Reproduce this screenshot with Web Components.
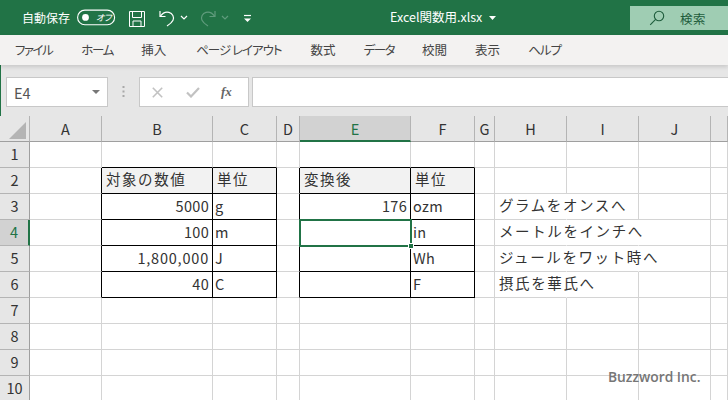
<!DOCTYPE html>
<html lang="ja"><head><meta charset="utf-8"><title>Excel</title>
<style>
html,body{margin:0;padding:0;background:#fff}
body{width:728px;height:400px;overflow:hidden;font-family:"Noto Sans CJK JP","Noto Sans",sans-serif}
</style></head><body>
<x-titlebar></x-titlebar>
<x-tabs></x-tabs>
<x-formula></x-formula>
<x-sheet></x-sheet>
<script>
const FONT='"Noto Sans CJK JP","Noto Sans",sans-serif';
function mk(tag,css,html){customElements.define(tag,class extends HTMLElement{constructor(){super();this.attachShadow({mode:'open'}).innerHTML='<style>'+css+'</style>'+html;}});}

mk('x-titlebar',`
:host{display:flex;align-items:flex-start;height:35px;background:#217346;color:#fff;font-family:${FONT};box-sizing:border-box;position:relative}
.lbl{font-size:12px;font-feature-settings:"palt";margin:10px 0 0 22px;line-height:16px;width:48px;white-space:nowrap}
svg{display:block;flex:none}
.tg{position:relative;margin:9px 0 0 7px;width:39px;height:17px;flex:none}
.tg span{position:absolute;left:19px;top:2px;font-size:9px;line-height:13px;font-style:italic;font-feature-settings:"palt";white-space:nowrap;letter-spacing:-.3px}
.title{font-size:12.5px;line-height:16px;margin:9px 0 0 0;white-space:nowrap;font-feature-settings:"palt"}
.search{margin-left:auto;margin-top:6px;width:98px;height:24px;background:#9fcdb3;display:flex;align-items:center;color:#1e5c3c;font-size:12.5px}
.search span{margin-left:15px;font-feature-settings:"palt";letter-spacing:.5px}
`,`
<div class="lbl">自動保存</div>
<div class="tg"><svg width="39" height="17" viewBox="0 0 39 17"><rect x=".6" y="1.1" width="37" height="14.6" rx="7.3" fill="none" stroke="#fff" stroke-width="1.1"/><circle cx="8.5" cy="8.4" r="3.4" fill="#fff"/></svg><span>オフ</span></div>
<svg style="margin:10px 0 0 12px" width="18" height="18" viewBox="0 0 18 18" fill="none" stroke="#fff" stroke-width="1"><path d="M1.5 1.5H16.5V16.5H1.5Z"/><path d="M4.5 1.5V7.5H13.5V1.5"/><path d="M5 16.5V11H13V16.5"/></svg>
<svg style="margin:9px 0 0 12px" width="18" height="19" viewBox="0 0 18 19" fill="none" stroke="#fff" stroke-width="1.2"><path d="M2 2V7.5H7.5"/><path d="M2.4 7.2C4.5 4.2 8 2.6 11 3.4C14.6 4.4 16.4 8 15 11.2C14 13.4 11.5 15.4 9 17"/></svg>
<svg style="margin:15px 0 0 4px" width="8" height="5" viewBox="0 0 8 5" fill="none" stroke="#fff" stroke-width="1.2"><path d="M1 1L4 4L7 1"/></svg>
<svg style="margin:9px 0 0 11px" width="18" height="19" viewBox="0 0 18 19" fill="none" stroke="#5f9b7c" stroke-width="1.2"><path d="M16 2V7.5H10.5"/><path d="M15.6 7.2C13.5 4.2 10 2.6 7 3.4C3.4 4.4 1.6 8 3 11.2C4 13.4 6.5 15.4 9 17"/></svg>
<svg style="margin:15px 0 0 4px" width="8" height="5" viewBox="0 0 8 5" fill="none" stroke="#5f9b7c" stroke-width="1.2"><path d="M1 1L4 4L7 1"/></svg>
<svg style="margin:14px 0 0 14px" width="9" height="9" viewBox="0 0 9 9"><path d="M1 1.5H8" stroke="#fff" stroke-width="1.2"/><path d="M1 4.5H8L4.5 8Z" fill="#fff"/></svg>
<div class="title" style="margin-left:138px">Excel関数用.xlsx</div>
<svg style="margin:16px 0 0 7px" width="7" height="4" viewBox="0 0 7 4"><path d="M0 0H7L3.5 4Z" fill="#fff"/></svg>
<div class="search"><svg style="margin-left:19px" width="16" height="16" viewBox="0 0 16 16" fill="none" stroke="#1e5c3c" stroke-width="1.1"><circle cx="10" cy="6" r="4.7"/><path d="M6.6 9.4L1.2 14.8"/></svg><span>検索</span></div>
<i style="position:absolute;left:0;top:0;width:1px;height:400px;background:#217346"></i>
`);

mk('x-tabs',`
:host{display:flex;height:30px;align-items:center;gap:28px;padding-left:15px;background:#f3f2f1;color:#444;font:12.5px/30px ${FONT};box-shadow:0 2px 4px rgba(0,0,0,.13);position:relative;z-index:1;box-sizing:border-box}
span{font-feature-settings:"palt";white-space:nowrap}
`,`<span style="letter-spacing:-1.5px;margin-right:1px">ファイル</span><span style="letter-spacing:-1.3px">ホーム</span><span>挿入</span><span style="letter-spacing:-1px;margin-left:2px">ページ レイアウト</span><span style="margin-left:1px">数式</span><span style="letter-spacing:-1.5px">データ</span><span>校閲</span><span>表示</span><span style="letter-spacing:-1px">ヘルプ</span>`);

mk('x-formula',`
:host{display:flex;height:51px;box-sizing:border-box;padding:12px 0 10px 6px;background:#e6e6e6;font-family:${FONT}}
.box{background:#fff;border:1px solid #c8c8c8;box-sizing:border-box;height:30px;display:flex;align-items:center}
.name{width:102px;padding-left:7px;color:#555;font-size:14.5px;justify-content:space-between;padding-right:7px}
.dots{width:31px;display:flex;justify-content:center;align-items:center}
.fx{width:110px;justify-content:flex-start}
.inp{flex:1;margin-left:3px;border-right:0}
svg{display:block;flex:none}
i{font:italic bold 13px "Liberation Serif",serif;color:#666}
`,`
<div class="box name"><span>E4</span><svg width="8" height="4" viewBox="0 0 8 4"><path d="M0 0H8L4 4Z" fill="#777"/></svg></div>
<div class="dots"><svg width="3" height="11" viewBox="0 0 3 11" fill="#a8a8a8"><rect x=".5" y="0" width="2" height="2"/><rect x=".5" y="4.5" width="2" height="2"/><rect x=".5" y="9" width="2" height="2"/></svg></div>
<div class="box fx">
<svg style="margin-left:12px" width="11" height="11" viewBox="0 0 11 11" fill="none" stroke="#c2c2c2" stroke-width="1.6"><path d="M.8.8L10.2 10.2M10.2.8L.8 10.2"/></svg>
<svg style="margin-left:23px" width="14" height="11" viewBox="0 0 14 11" fill="none" stroke="#c2c2c2" stroke-width="2.2"><path d="M1 5.5L5 9.5L13 1"/></svg>
<i style="margin-left:21px">fx</i></div>
<div class="box inp"></div>
`);

const COLS=[30,72,111,64,23,111,64,20,72,72,72,17];
const HEAD=['','A','B','C','D','E','F','G','H','I','J',''];
const DATA={
 2:{B:['対象の数値','h'],C:['単位','h'],E:['変換後','h'],F:['単位','h']},
 3:{B:['5000','n'],C:['g'],E:['176','n'],F:['ozm'],H:['グラムをオンスへ','o']},
 4:{B:['100','n'],C:['m'],E:[''],F:['in'],H:['メートルをインチへ','o']},
 5:{B:['1,800,000','n nw'],C:['J'],E:[''],F:['Wh'],H:['ジュールをワット時へ','o']},
 6:{B:['40','n'],C:['C'],E:[''],F:['F'],H:['摂氏を華氏へ','o']}
};
const TBL=new Set(['B','C','E','F']);
customElements.define('x-sheet',class extends HTMLElement{constructor(){super();
 let h='<style>'+`
:host{display:block;font-family:${FONT};position:relative;height:284px;overflow:hidden}
.g{display:grid;grid-template-columns:${COLS.map(c=>c+'px').join(' ')};grid-auto-rows:26px;position:relative;background:#fff}
.c{box-sizing:border-box;border-right:1px solid #d4d4d4;border-bottom:1px solid #d4d4d4;font-size:14.5px;line-height:24px;color:#333;padding:0 2px;white-space:nowrap;min-width:0}
.ch{background:#e6e6e6;border-right:1px solid #b4b4b4;border-bottom:1px solid #9f9f9f;text-align:center;line-height:25px;padding:0}
.rh{background:#e6e6e6;border-right:1px solid #9f9f9f;border-bottom:1px solid #b4b4b4;text-align:center;padding:0}
.ch.s{background:#d2d2d2;color:#217346;border-bottom:2px solid #217346}
.rh.s{background:#d2d2d2;color:#217346;border-right:2px solid #217346}
.bb{border-bottom-color:#000}.br{border-right-color:#000}
.nr{border-right-color:transparent}
.h{background:#f2f2f2;letter-spacing:1.55px;padding-left:4px;line-height:22px}
.n{text-align:right;letter-spacing:.3px;padding-right:3px}
.nw{letter-spacing:.8px}
.o{letter-spacing:1.6px;padding-left:4px;line-height:22px}
.t{letter-spacing:.3px}
.sel{position:absolute;left:298.5px;top:102.5px;width:113px;height:28px;box-sizing:border-box;border:2px solid #217346;pointer-events:none}
.hd{position:absolute;right:-4px;bottom:-4px;width:6px;height:6px;background:#217346;border:1px solid #fff;box-sizing:border-box}
.wm{position:absolute;left:608px;top:252px;font:600 13.8px/18px "Open Sans",sans-serif;color:#767676;white-space:nowrap}
`+'</style><div class="g">';
 for(let r=0;r<=10;r++){
  HEAD.forEach((L,i)=>{
   let cls='c',txt='',extra='';
   if(r==0){
     cls+=' ch'+(L=='E'?' s':''); txt=L;
     if(i==0) extra='<svg style="display:block;margin:6px 0 0 9px" width="17" height="17" viewBox="0 0 17 17"><path d="M17 0V17H0Z" fill="#b4b4b4"/></svg>';
   } else if(i==0){
     cls+=' rh'+(r==4?' s':''); txt=String(r);
   } else if(L){
     const d=(DATA[r]||{})[L];
     if(TBL.has(L)&&r>=1&&r<=6) cls+=' bb';
     if((L=='A'||L=='D'||TBL.has(L))&&r>=2&&r<=6) cls+=' br';
     if((L=='H'&&r>=3&&r<=6)||(L=='I'&&(r==4||r==5))) cls+=' nr';
     if(d){txt=d[0]; cls+=' '+(d[1]||'t');}
   }
   h+=`<div class="${cls}">${extra||txt}</div>`;
  });
 }
 h+='<div class="sel"><div class="hd"></div></div><div class="wm">Buzzword Inc.</div></div>';
 this.attachShadow({mode:'open'}).innerHTML=h;
}});
</script>
</body></html>
